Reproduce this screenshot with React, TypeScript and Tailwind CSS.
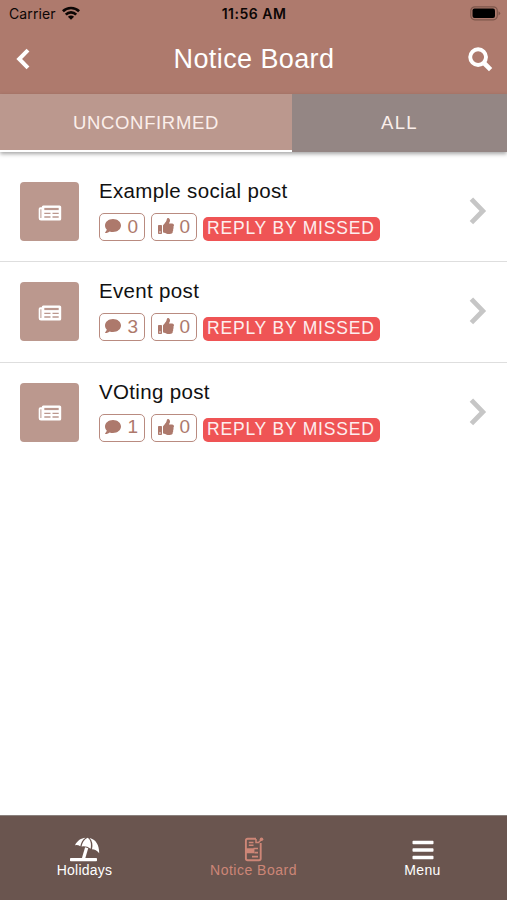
import { FaComment, FaThumbsUp, FaBars } from "react-icons/fa";

const posts = [
  { title: "Example social post", comments: 0, likes: 0 },
  { title: "Event post", comments: 3, likes: 0 },
  { title: "VOting post", comments: 1, likes: 0 },
];

function WifiIcon() {
  return (
    <svg width="18" height="14" viewBox="0 0 18 14" fill="none" stroke="#0c0605" strokeWidth="2.7">
      <path d="M0.9 5.2C5.3 0.9 12.7 0.9 17.1 5.2" />
      <path d="M3.8 8.6C6.7 5.7 11.3 5.7 14.2 8.6" />
      <path d="M9 13.8L5.9 10.7C7.6 9.2 10.4 9.2 12.1 10.7Z" fill="#0c0605" stroke="none" />
    </svg>
  );
}

function BatteryIcon() {
  return (
    <svg width="31" height="15" viewBox="0 0 31 15">
      <rect x="0.8" y="0.8" width="26.5" height="13" rx="4" fill="none" stroke="#7d564b" strokeWidth="1.2" />
      <rect x="2.5" y="2.5" width="22.5" height="9.6" rx="2" fill="#000" />
      <path d="M28.5 5.2Q30.2 6 30.2 7.3T28.5 9.4Z" fill="#7d564b" />
    </svg>
  );
}

function BackIcon() {
  return (
    <svg width="14" height="22" viewBox="0 0 14 22" fill="none" stroke="#fff" strokeWidth="4">
      <path d="M12 2.2L3.2 11L12 19.8" />
    </svg>
  );
}

function SearchIcon() {
  return (
    <svg width="25" height="25" viewBox="0 0 25 25" fill="none" stroke="#fff">
      <circle cx="10.1" cy="10.1" r="7.9" strokeWidth="3.9" />
      <path d="M16 16L22.6 22.6" strokeWidth="4.6" />
    </svg>
  );
}

function NewsIcon() {
  return (
    <svg width="24" height="16" viewBox="0 0 24 16" className="mt-[2px]">
      <path
        d="M5.2 0.5H21.6Q23.2 0.5 23.2 2V14Q23.2 15.5 21.6 15.5H3Q0.7 15.5 0.7 13.3V4Q0.7 2.5 2.3 2.3H3.8V2Q3.8 0.5 5.2 0.5Z"
        fill="#fff"
      />
      <path d="M2.9 4.3V13" stroke="#bb988e" strokeWidth="1" />
      <path d="M6.3 4H20.7" stroke="#bb988e" strokeWidth="2.2" />
      <path d="M6.3 8.3H12.5M14.5 8.3H20.7M6.3 12H12.5M14.5 12H20.7" stroke="#bb988e" strokeWidth="1.3" />
    </svg>
  );
}

function NextIcon() {
  return (
    <svg width="18" height="28" viewBox="0 0 18 28" fill="none" stroke="#c6c6c6" strokeWidth="4.8" className="mt-[15px]">
      <path d="M2.4 2.2L13.8 13.9L2.4 25.6" />
    </svg>
  );
}

function BeachIcon() {
  return (
    <svg width="32" height="26" viewBox="0 0 32 26" fill="#fff">
      <path d="M6 9.2C8.2 4.5 12.3 2 16.5 1.7C13.7 3.6 12 6.6 11.3 10.3Q8.5 8.4 6 9.2Z" />
      <path d="M12.5 10.6C13.4 6.5 15.2 3.4 18.5 1.7C21.8 3.7 22.5 7.7 21.7 12.7Q17.2 9.6 12.5 10.6Z" />
      <path d="M20.6 1.9C26.5 3.2 30.4 8.5 30.2 17.3Q27.1 13.2 23 13.2C24.1 8.6 23.3 4.5 20.6 1.9Z" />
      <path d="M16.1 11.3L19.2 12.2L16.2 22.5H12.8Z" />
      <rect x="1" y="22" width="27" height="3.2" rx="0.8" />
    </svg>
  );
}

function BoardIcon() {
  return (
    <svg width="20" height="26" viewBox="0 0 20 26" fill="none" stroke="#cd8677" strokeWidth="1.9">
      <path d="M12 2.8H3.6Q1.9 2.8 1.9 4.5V22.5Q1.9 24.2 3.6 24.2H15Q16.7 24.2 16.7 22.5V7" />
      <path d="M4.8 6.5H9.5M4.8 9.3H9.5" strokeWidth="1.5" />
      <path d="M2 13.3H9.5V16.3H2" fill="#cd8677" />
      <path d="M9.5 12.5H14M10.5 16.6H14M8 20.6H14" strokeWidth="1.6" />
      <path d="M12 3V6.5H14.5L17.4 3.8" strokeWidth="1.5" />
      <circle cx="17.5" cy="3.2" r="1.8" fill="#cd8677" stroke="none" />
    </svg>
  );
}

function Post({ title, comments, likes }: { title: string; comments: number; likes: number }) {
  return (
    <li className="flex h-[100.3px] border-b border-[#dedede] pl-5 pr-[20px] pt-[20px] last:border-0">
      <div className="flex size-[59px] shrink-0 items-center justify-center rounded bg-[#bb988e]">
        <NewsIcon />
      </div>
      <div className="ml-5 flex-1">
        <h2 className="-mt-[5px] h-[26px] whitespace-nowrap text-[20.5px] leading-[27px] tracking-[0.33px] text-[#111]">{title}</h2>
        <div className="mt-[10px] flex gap-[6px] text-[#ad796c]">
          <span className="flex h-[28px] w-[46px] items-center justify-between rounded-[5px] border border-[#b98b80] pl-[5px] pr-[6px] text-[19px]">
            <FaComment size={16} className="-mt-[2px]" />
            {comments}
          </span>
          <span className="flex h-[28px] w-[46px] items-center justify-between rounded-[5px] border border-[#b98b80] pl-[6px] pr-[6px] text-[19px]">
            <FaThumbsUp size={16} className="-mt-[2px]" />
            {likes}
          </span>
          <span className="mt-1 flex h-[24px] w-[177px] items-center whitespace-nowrap rounded-[5px] bg-[#ef5455] pb-[2px] pl-[4px] text-[17.5px] leading-[22px] tracking-[0.8px] text-[#fdeeee]">
            REPLY BY MISSED
          </span>
        </div>
      </div>
      <NextIcon />
    </li>
  );
}

export default function App() {
  return (
    <div className="flex h-[900px] w-[507px] flex-col overflow-hidden bg-white font-['Liberation_Sans',sans-serif]">
      <header className="bg-[#ae7a6d]">
        <div className="grid h-[26px] grid-cols-3 items-center pl-[9px] pr-[6px] font-['Inter',sans-serif] text-[14px] text-[#0c0605]">
          <div className="flex items-center gap-[6px] tracking-[0.1px]">
            Carrier
            <WifiIcon />
          </div>
          <p className="pr-[2px] text-center font-semibold tracking-[0.5px]">11:56 AM</p>
          <div className="flex justify-end">
            <BatteryIcon />
          </div>
        </div>
        <div className="flex h-[68px] items-center justify-between pb-[2px] pl-[16px] pr-[14px] text-white">
          <BackIcon />
          <h1 className="ml-[10px] text-[27px] leading-[32px] tracking-[0.4px]">Notice Board</h1>
          <SearchIcon />
        </div>
      </header>

      <nav className="flex h-[58px] shrink-0 text-[18.5px] text-[#fbefeb] shadow-[0_2px_4px_rgba(0,0,0,0.35)]">
        <button className="w-[292px] border-b-2 border-white bg-[#bb988e] pt-[1px] tracking-[0.65px]">UNCONFIRMED</button>
        <button className="flex-1 bg-[#948684] tracking-[1.4px]">ALL</button>
      </nav>

      <ul className="mt-[10px] flex-1">
        {posts.map((post) => (
          <Post key={post.title} {...post} />
        ))}
      </ul>

      <footer className="grid h-[85px] grid-cols-3 border-t border-[#8a817d] bg-[#6a554f] pt-[20px] text-[14px] leading-[16px] text-white">
        <div className="flex flex-col items-center tracking-[0.25px]">
          <BeachIcon />
          Holidays
        </div>
        <div className="flex flex-col items-center tracking-[0.5px] text-[#cd8677]">
          <BoardIcon />
          Notice Board
        </div>
        <div className="flex flex-col items-center tracking-[0.4px]">
          <FaBars size={24} className="mt-[2px]" />
          Menu
        </div>
      </footer>
    </div>
  );
}
